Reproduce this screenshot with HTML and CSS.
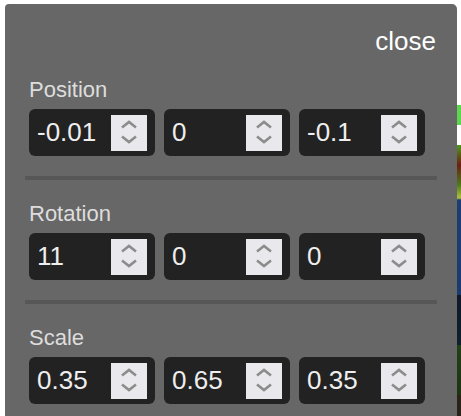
FILE: index.html
```html
<!DOCTYPE html>
<html lang="en">
<head>
    <meta charset="UTF-8">
    <title>Transform</title>
    <link rel="stylesheet" href="styles.css">
</head>
<body>
<div class="panel">
    <div class="close-row"><span class="close">close</span></div>

    <div class="group">
        <div class="label">Position</div>
        <div class="fields">
            <div class="num"><span class="val">-0.01</span><span class="spin"><svg viewBox="0 0 36 36"><path d="M11 12.5 L18 7 L25 12.5 M11 21.5 L18 27 L25 21.5"/></svg></span></div>
            <div class="num"><span class="val">0</span><span class="spin"><svg viewBox="0 0 36 36"><path d="M11 12.5 L18 7 L25 12.5 M11 21.5 L18 27 L25 21.5"/></svg></span></div>
            <div class="num"><span class="val">-0.1</span><span class="spin"><svg viewBox="0 0 36 36"><path d="M11 12.5 L18 7 L25 12.5 M11 21.5 L18 27 L25 21.5"/></svg></span></div>
        </div>
    </div>
    <hr class="sep">

    <div class="group">
        <div class="label">Rotation</div>
        <div class="fields">
            <div class="num"><span class="val">11</span><span class="spin"><svg viewBox="0 0 36 36"><path d="M11 12.5 L18 7 L25 12.5 M11 21.5 L18 27 L25 21.5"/></svg></span></div>
            <div class="num"><span class="val">0</span><span class="spin"><svg viewBox="0 0 36 36"><path d="M11 12.5 L18 7 L25 12.5 M11 21.5 L18 27 L25 21.5"/></svg></span></div>
            <div class="num"><span class="val">0</span><span class="spin"><svg viewBox="0 0 36 36"><path d="M11 12.5 L18 7 L25 12.5 M11 21.5 L18 27 L25 21.5"/></svg></span></div>
        </div>
    </div>
    <hr class="sep">

    <div class="group">
        <div class="label">Scale</div>
        <div class="fields">
            <div class="num"><span class="val">0.35</span><span class="spin"><svg viewBox="0 0 36 36"><path d="M11 12.5 L18 7 L25 12.5 M11 21.5 L18 27 L25 21.5"/></svg></span></div>
            <div class="num"><span class="val">0.65</span><span class="spin"><svg viewBox="0 0 36 36"><path d="M11 12.5 L18 7 L25 12.5 M11 21.5 L18 27 L25 21.5"/></svg></span></div>
            <div class="num"><span class="val">0.35</span><span class="spin"><svg viewBox="0 0 36 36"><path d="M11 12.5 L18 7 L25 12.5 M11 21.5 L18 27 L25 21.5"/></svg></span></div>
        </div>
    </div>
</div>
</body>
</html>
```

FILE: styles.css
```css
* {
    margin: 0;
    padding: 0;
    box-sizing: border-box;
}

html, body {
    height: 100%;
    overflow: hidden;
}

body {
    font-family: "Liberation Sans", Arial, sans-serif;
    background: #fff linear-gradient(to bottom,
        #fff 0, #fff 105px,
        #5bd64f 105px, #5bd64f 125px,
        #fff 125px, #fff 145px,
        #4c9a1e 145px, #6b1f12 165px, #4e7a1c 185px, #b0c23c 198px,
        #1b3f73 200px, #1a3b6e 295px,
        #0e1a2a 295px, #10202c 345px,
        #23401a 345px, #1e3312 395px,
        #2a2418 395px, #2a2418 416px) no-repeat right top / 4px 100%;
}

.panel {
    width: 452px;
    height: 420px;
    margin: 4px 0 0 5px;
    padding: 22px 20px 0 20px;
    background-color: #676767;
    border-radius: 4px 5px 0 0;
}

.close-row {
    display: flex;
    justify-content: flex-end;
    margin-bottom: 21px;
}

.close {
    font-size: 26px;
    line-height: 30px;
    color: #fff;
    margin-right: 1px;
}

.group {
    padding-left: 4px;
}

.label {
    font-size: 22px;
    line-height: 26px;
    color: #ddd;
    margin-bottom: 6px;
}

.fields {
    display: flex;
    gap: 9px;
}

.num {
    width: 126px;
    height: 47px;
    display: flex;
    align-items: center;
    justify-content: space-between;
    padding: 0 8px 0 8px;
    background-color: #222;
    border-radius: 6px;
}

.val {
    font-size: 26px;
    line-height: 47px;
    color: #eee;
}

.spin {
    width: 36px;
    height: 36px;
    background-color: #e9e9ed;
    display: block;
}

.spin svg {
    width: 36px;
    height: 36px;
    display: block;
    fill: none;
    stroke: #8c8c8c;
    stroke-width: 2.6;
}

.sep {
    border: none;
    height: 4px;
    background-color: #575757;
    margin: 20px 0 21px 0;
}
```
